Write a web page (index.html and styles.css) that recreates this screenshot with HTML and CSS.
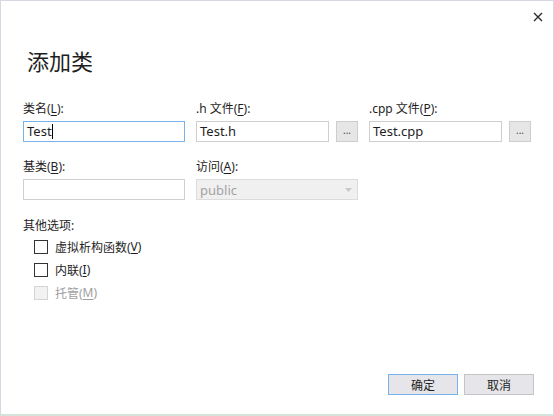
FILE: index.html
```html
<!DOCTYPE html>
<html lang="zh-CN">
<head>
  <meta charset="UTF-8">
  <title>添加类</title>
  <link rel="stylesheet" href="styles.css">
</head>
<body>

  <div class="dialog">

    <!-- Caption bar with close glyph -->
    <div class="caption">
      <svg class="close" width="10" height="10" viewBox="0 0 10 10">
        <path d="M1 1 L9 9 M9 1 L1 9" stroke="#2b2b2b" stroke-width="1.4" fill="none"/>
      </svg>
    </div>

    <h1>添加类</h1>

    <div class="fields">
      <div class="field">
        <label>类名(<u>L</u>):</label>
        <div class="edit focused">Test<span class="caret"></span></div>
      </div>
      <div class="field">
        <label>.h 文件(<u>F</u>):</label>
        <div class="browse">
          <div class="edit">Test.h</div>
          <button class="dots">...</button>
        </div>
      </div>
      <div class="field">
        <label>.cpp 文件(<u>P</u>):</label>
        <div class="browse">
          <div class="edit">Test.cpp</div>
          <button class="dots">...</button>
        </div>
      </div>

      <div class="field">
        <label>基类(<u>B</u>):</label>
        <div class="edit"></div>
      </div>
      <div class="field">
        <label>访问(<u>A</u>):</label>
        <div class="combo">
          <span>public</span>
          <svg width="7" height="4" viewBox="0 0 7 4"><path d="M0 0 H7 L3.5 4 Z" fill="#c8c8c8"/></svg>
        </div>
      </div>
    </div>

    <div class="options">
      <label>其他选项:</label>
      <div class="check"><span class="box"></span>虚拟析构函数(<u>V</u>)</div>
      <div class="check"><span class="box"></span>内联(<u>I</u>)</div>
      <div class="check disabled"><span class="box"></span>托管(<u>M</u>)</div>
    </div>

    <div class="footer">
      <button class="btn default">确定</button>
      <button class="btn">取消</button>
    </div>

  </div>

</body>
</html>
```

FILE: styles.css
```css
body {
  margin: 0;
  background: #fff;
  font-family: "Noto Sans", "Noto Sans CJK SC", sans-serif;
  font-size: 12px;
  color: #1e1e1e;
}

.dialog {
  box-sizing: border-box;
  width: 554px;
  height: 416px;
  border: 1px solid #d6d6e4;
  border-bottom: 2px solid #d5e3da;
  display: flex;
  flex-direction: column;
  padding: 0 22px;
}

.caption {
  height: 40px;
  display: flex;
  justify-content: flex-end;
  align-items: flex-start;
  padding-top: 11px;
  box-sizing: border-box;
  margin-right: -12px;
}

h1 {
  margin: 3px 0 0 4px;
  font-family: "Noto Sans CJK SC", sans-serif;
  font-weight: normal;
  font-size: 22px;
  line-height: 32px;
  height: 57px;
}

.fields {
  display: grid;
  grid-template-columns: 162px 162px 162px;
  column-gap: 11px;
  row-gap: 17px;
}

.field label,
.options label {
  display: block;
  line-height: 16px;
  margin-bottom: 4px;
}

u {
  text-decoration-thickness: 1px;
  text-underline-offset: 2px;
}

.edit {
  box-sizing: border-box;
  height: 21px;
  border: 1px solid #cfcfcf;
  background: #fff;
  padding: 0 3px;
  font-size: 13px;
  line-height: 19px;
  flex: 1;
}

.edit.focused {
  border-color: #78b2ea;
}

.caret {
  display: inline-block;
  width: 1px;
  height: 15px;
  background: #000;
  vertical-align: -3px;
}

.browse {
  display: flex;
  gap: 7px;
}

.dots {
  width: 22px;
  height: 21px;
  padding: 0 0 4px;
  border: 1px solid #cdcdcd;
  background: #e6e6e6;
  color: #444;
  font-family: inherit;
  font-size: 10px;
}

.combo {
  box-sizing: border-box;
  height: 21px;
  border: 1px solid #dcdcdc;
  background: #f0f0f0;
  color: #a2a2a2;
  display: flex;
  align-items: center;
  justify-content: space-between;
  padding: 0 5px 0 3px;
  font-size: 13px;
}

.options {
  margin-top: 18px;
}

.options label {
  margin-bottom: 1px;
}

.check {
  display: flex;
  align-items: center;
  height: 23px;
  margin-left: 11px;
}

.check .box {
  box-sizing: border-box;
  width: 14px;
  height: 14px;
  border: 1px solid #333;
  background: #fff;
  margin-right: 7px;
}

.check.disabled {
  color: #a0a0a0;
}

.check.disabled .box {
  border-color: #d4d4d4;
  background: #f2f2f2;
}

.footer {
  margin-top: auto;
  margin-bottom: 19px;
  margin-right: -3px;
  display: flex;
  justify-content: flex-end;
  gap: 6px;
}

.btn {
  width: 70px;
  height: 21px;
  border: 1px solid #c4c4c4;
  background: #e6e6ea;
  color: #1e1e1e;
  font-family: "Noto Sans CJK SC", sans-serif;
  font-size: 12px;
  padding: 0;
}

.btn.default {
  border-color: #78b2ea;
}
```
